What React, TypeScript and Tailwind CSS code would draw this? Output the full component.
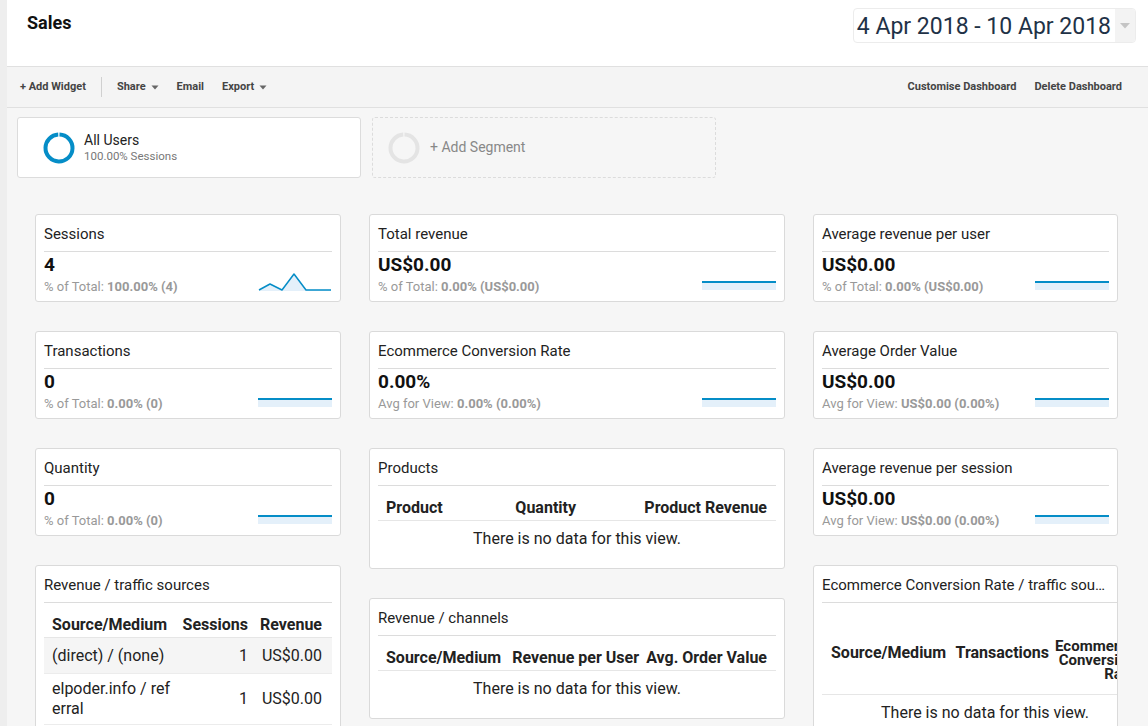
import React from 'react';

const font = { fontFamily: 'Roboto, "Liberation Sans", sans-serif' };

type Metric = {
  title: string;
  value: string;
  label: string;
  total: string;
  spark?: 'sessions' | 'flat';
};

function Caret() {
  return (
    <svg width="8" height="5" viewBox="0 0 8 5" className="ml-[5px]">
      <path d="M0.5 0.5 L7.5 0.5 L4 4.5 Z" fill="#666" />
    </svg>
  );
}

function Donut({ color }: { color: string }) {
  return (
    <svg width="32" height="32" viewBox="0 0 32 32">
      <circle
        cx="16"
        cy="16"
        r="13.5"
        fill="none"
        stroke={color}
        strokeWidth="4"
        strokeDasharray="83 1.8"
        transform="rotate(-88 16 16)"
      />
    </svg>
  );
}

function Sparkline({ kind }: { kind: 'sessions' | 'flat' }) {
  if (kind === 'sessions') {
    return (
      <svg width="74" height="19" viewBox="0 0 74 19" className="mb-[4px]">
        <path d="M1 18 L12 12 L24 18 L36 2 L48 18 L73 18 L73 19 L1 19 Z" fill="#e4f0fa" />
        <path d="M1 18 L12 12 L24 18 L36 2 L48 18 L73 18" fill="none" stroke="#058dc7" strokeWidth="1.5" strokeLinejoin="round" />
      </svg>
    );
  }
  return (
    <svg width="74" height="19" viewBox="0 0 74 19" className="mb-[4px]">
      <rect x="0" y="11" width="74" height="7" fill="#e4f0fa" />
      <rect x="0" y="9" width="74" height="2" fill="#058dc7" />
    </svg>
  );
}

function MetricCard({ m }: { m: Metric }) {
  return (
    <div className="bg-white border border-[#dadada] rounded-[3px] px-[8px] pt-[9px] pb-[6px]">
      <div className="text-[15px] leading-[20px] text-[#222] pb-[7px] border-b border-[#dcdcdc]">{m.title}</div>
      <div className="flex items-end justify-between">
        <div>
          <div className="mt-[2px] text-[19px] leading-[22px] font-bold text-[#111]">{m.value}</div>
          <div className="mt-[3px] text-[13px] leading-[16px] text-[#999]">
            {m.label} <span className="font-bold">{m.total}</span>
          </div>
        </div>
        <Sparkline kind={m.spark ?? 'flat'} />
      </div>
    </div>
  );
}

function CardTitle({ children }: { children: React.ReactNode }) {
  return <div className="text-[15px] leading-[20px] text-[#222] pb-[7px] truncate">{children}</div>;
}

const th = 'text-[16px] leading-[20px] font-bold text-[#222] pt-[12px] pb-[2px] border-b border-[#e6e6e6]';

function NoData({ span }: { span: number }) {
  return (
    <tr>
      <td colSpan={span} className="text-center text-[16px] leading-[20px] text-[#222] py-[8px]">
        There is no data for this view.
      </td>
    </tr>
  );
}

function ProductsCard() {
  return (
    <div className="bg-white border border-[#dadada] rounded-[3px] px-[8px] pt-[9px] pb-[11px]">
      <CardTitle>Products</CardTitle>
      <table className="w-full table-fixed border-collapse border-t border-[#dcdcdc]">
        <colgroup>
          <col className="w-[133px]" />
          <col className="w-[73px]" />
          <col />
        </colgroup>
        <thead>
          <tr>
            <th className={`${th} text-left pl-[8px]`}>Product</th>
            <th className={`${th} text-right pr-[8px]`}>Quantity</th>
            <th className={`${th} text-right pr-[9px]`}>Product Revenue</th>
          </tr>
        </thead>
        <tbody>
          <NoData span={3} />
        </tbody>
      </table>
    </div>
  );
}

function ChannelsCard() {
  return (
    <div className="bg-white border border-[#dadada] rounded-[3px] px-[8px] pt-[9px] pb-[11px]">
      <CardTitle>Revenue / channels</CardTitle>
      <table className="w-full table-fixed border-collapse border-t border-[#dcdcdc]">
        <colgroup>
          <col className="w-[124px]" />
          <col className="w-[140px]" />
          <col />
        </colgroup>
        <thead>
          <tr>
            <th className={`${th} text-left pl-[8px]`}>Source/Medium</th>
            <th className={`${th} text-right pr-[3px]`}>Revenue per User</th>
            <th className={`${th} text-right pr-[9px]`}>Avg. Order Value</th>
          </tr>
        </thead>
        <tbody>
          <NoData span={3} />
        </tbody>
      </table>
    </div>
  );
}

const sources = [
  { source: '(direct) / (none)', sessions: '1', revenue: 'US$0.00' },
  { source: 'elpoder.info / referral', sessions: '1', revenue: 'US$0.00' },
];

function TrafficCard() {
  const td = 'text-[16px] leading-[20px] text-[#222] py-[5px] h-[36px] align-middle';
  return (
    <div className="bg-white border border-[#dadada] rounded-[3px] px-[8px] pt-[9px] pb-[11px]">
      <CardTitle>Revenue / traffic sources</CardTitle>
      <table className="w-full table-fixed border-collapse border-t border-[#dcdcdc]">
        <colgroup>
          <col className="w-[133px]" />
          <col className="w-[79px]" />
          <col />
        </colgroup>
        <thead>
          <tr>
            <th className={`${th} text-left pl-[8px]`}>Source/Medium</th>
            <th className={`${th} text-right pr-[8px]`}>Sessions</th>
            <th className={`${th} text-right pr-[10px]`}>Revenue</th>
          </tr>
        </thead>
        <tbody>
          {sources.map((r, i) => (
            <tr key={r.source} className={`border-b border-[#ececec] ${i === 0 ? 'bg-[#f5f5f5]' : ''}`}>
              <td className={`${td} pl-[8px] pr-[4px] break-all`}>{r.source}</td>
              <td className={`${td} text-right pr-[8px]`}>{r.sessions}</td>
              <td className={`${td} text-right pr-[10px]`}>{r.revenue}</td>
            </tr>
          ))}
        </tbody>
      </table>
    </div>
  );
}

function ConversionTrafficCard() {
  const head = 'font-bold text-[#222] border-b border-[#e6e6e6] h-[92px] align-middle';
  return (
    <div className="bg-white border border-[#dadada] rounded-[3px] pl-[8px] pt-[9px] pb-[11px] overflow-hidden">
      <div className="pr-[8px]">
        <CardTitle>Ecommerce Conversion Rate / traffic sources</CardTitle>
      </div>
      {/* table is wider than the card; the last column is clipped like the original */}
      <table className="w-[326px] table-fixed border-collapse border-t border-[#dcdcdc]">
        <colgroup>
          <col className="w-[130px]" />
          <col className="w-[100px]" />
          <col />
        </colgroup>
        <thead>
          <tr>
            <th className={`${head} text-[16px] leading-[20px] text-left pl-[9px] pt-[8px]`}>Source/Medium</th>
            <th className={`${head} text-[16px] leading-[20px] text-right pr-[3px] pt-[8px]`}>Transactions</th>
            <th className={`${head} text-[15px] leading-[14px] text-right pt-[22px] pl-0 pr-[13px]`}>
              Ecommerce Conversion Rate
            </th>
          </tr>
        </thead>
        <tbody>
          <NoData span={3} />
        </tbody>
      </table>
    </div>
  );
}

const col1: Metric[] = [
  { title: 'Sessions', value: '4', label: '% of Total:', total: '100.00% (4)', spark: 'sessions' },
  { title: 'Transactions', value: '0', label: '% of Total:', total: '0.00% (0)' },
  { title: 'Quantity', value: '0', label: '% of Total:', total: '0.00% (0)' },
];

const col2: Metric[] = [
  { title: 'Total revenue', value: 'US$0.00', label: '% of Total:', total: '0.00% (US$0.00)' },
  { title: 'Ecommerce Conversion Rate', value: '0.00%', label: 'Avg for View:', total: '0.00% (0.00%)' },
];

const col3: Metric[] = [
  { title: 'Average revenue per user', value: 'US$0.00', label: '% of Total:', total: '0.00% (US$0.00)' },
  { title: 'Average Order Value', value: 'US$0.00', label: 'Avg for View:', total: 'US$0.00 (0.00%)' },
  { title: 'Average revenue per session', value: 'US$0.00', label: 'Avg for View:', total: 'US$0.00 (0.00%)' },
];

export default function App() {
  return (
    <div className="flex w-full h-[726px] overflow-hidden bg-[#eeeeee]" style={font}>
      <div className="w-[7px] shrink-0" />
      <div className="flex-1 flex flex-col bg-[#f6f6f6] min-w-0">
        {/* header */}
        <div className="h-[67px] shrink-0 bg-white border-b border-[#e0e0e0] flex justify-between">
          <div className="pl-[20px] pt-[12px] text-[18px] leading-[22px] font-bold text-[#111]">Sales</div>
          <div className="mt-[8px] mr-[12px] h-[35px] flex items-stretch border border-[#ececec] rounded-[4px] overflow-hidden">
            <div className="pl-[3px] pr-[4px] pt-[1px] text-[23px] leading-[33px] text-[#1f3247]">4 Apr 2018 - 10 Apr 2018</div>
            <div className="w-[20px] bg-[#f3f3f3] flex items-center justify-center">
              <svg width="10" height="6" viewBox="0 0 10 6">
                <path d="M0 0 L10 0 L5 5.5 Z" fill="#c4c4c4" />
              </svg>
            </div>
          </div>
        </div>

        {/* toolbar */}
        <div className="h-[41px] shrink-0 border-b border-[#e0e0e0] bg-[#f4f4f4] flex items-center justify-between text-[11px] font-bold text-[#444]">
          <div className="flex items-center pl-[13px]">
            <span>+ Add Widget</span>
            <div className="w-px h-[20px] bg-[#d0d0d0] ml-[15px] mr-[15px]" />
            <span className="flex items-center">Share<Caret /></span>
            <span className="ml-[18px]">Email</span>
            <span className="ml-[18px] flex items-center">Export<Caret /></span>
          </div>
          <div className="flex items-center pr-[26px]">
            <span>Customise Dashboard</span>
            <span className="ml-[18px]">Delete Dashboard</span>
          </div>
        </div>

        {/* segments */}
        <div className="flex gap-[11px] mt-[9px] pl-[10px]">
          <div className="w-[344px] h-[61px] bg-white border border-[#dcdcdc] rounded-[3px] flex items-center pl-[25px]">
            <Donut color="#058dc7" />
            <div className="ml-[9px]">
              <div className="text-[14px] leading-[17px] text-[#222]">All Users</div>
              <div className="text-[11.5px] leading-[14px] text-[#777]">100.00% Sessions</div>
            </div>
          </div>
          <div className="w-[344px] h-[61px] border border-dashed border-[#dcdcdc] rounded-[3px] flex items-center pl-[15px]">
            <Donut color="#e4e4e4" />
            <span className="ml-[10px] text-[14px] text-[#888]">+ Add Segment</span>
          </div>
        </div>

        {/* widgets */}
        <div className="flex items-start gap-[28px] mt-[36px] pl-[28px]">
          <div className="w-[306px] shrink-0 flex flex-col gap-[29px]">
            {col1.map(m => <MetricCard key={m.title} m={m} />)}
            <TrafficCard />
          </div>
          <div className="w-[416px] shrink-0 flex flex-col gap-[29px]">
            {col2.map(m => <MetricCard key={m.title} m={m} />)}
            <ProductsCard />
            <ChannelsCard />
          </div>
          <div className="w-[305px] shrink-0 flex flex-col gap-[29px]">
            {col3.map(m => <MetricCard key={m.title} m={m} />)}
            <ConversionTrafficCard />
          </div>
        </div>
      </div>
    </div>
  );
}
